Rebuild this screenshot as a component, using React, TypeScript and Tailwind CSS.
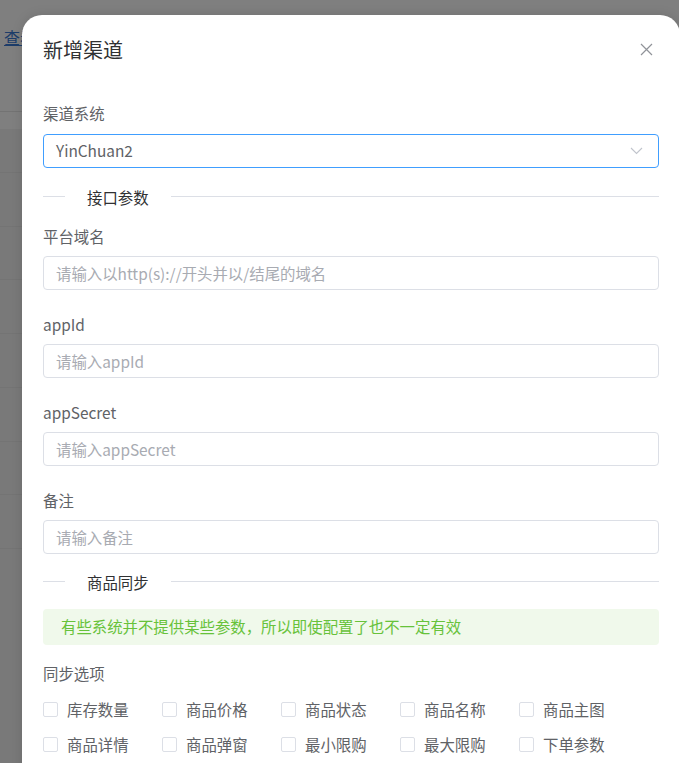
import { useState } from "react";

const FONT = { fontFamily: '"Microsoft YaHei", "Noto Sans CJK SC", "Noto Sans", sans-serif' };

const FIELDS = [
  { label: "平台域名", placeholder: "请输入以http(s)://开头并以/结尾的域名" },
  { label: "appId", placeholder: "请输入appId" },
  { label: "appSecret", placeholder: "请输入appSecret" },
  { label: "备注", placeholder: "请输入备注" },
];

const SYNC_OPTIONS = [
  "库存数量",
  "商品价格",
  "商品状态",
  "商品名称",
  "商品主图",
  "商品详情",
  "商品弹窗",
  "最小限购",
  "最大限购",
  "下单参数",
];

function Divider({ text, height }: { text: string; height: string }) {
  return (
    <div className={`flex items-center ${height}`}>
      <div className="h-px w-[22px] bg-[#dcdfe6]" />
      <span className="px-[22px] text-[15.4px] leading-[20px] text-[#303133]">{text}</span>
      <div className="h-px flex-1 bg-[#dcdfe6]" />
    </div>
  );
}

function Checkbox({ label }: { label: string }) {
  const [checked, setChecked] = useState(false);
  return (
    <label className="flex h-[35px] w-[119px] cursor-pointer items-center">
      <span
        className={`h-[15px] w-[15px] rounded-[2px] border ${
          checked ? "border-[#409eff] bg-[#409eff]" : "border-[#dcdfe6] bg-white"
        }`}
        onClick={() => setChecked(!checked)}
      />
      <span className="ml-[9px] text-[15.4px] text-[#606266]">{label}</span>
    </label>
  );
}

function Background() {
  const rows = [172, 226, 279, 333, 387, 441, 494, 548];
  return (
    <div className="absolute inset-0 bg-white">
      <a className="absolute left-[4px] top-[25px] text-[16px] text-[#3a7bd5] underline">查看</a>
      <div className="absolute left-0 right-0 top-[111px] h-px bg-[#e6e6e6]" />
      <div className="absolute left-0 right-0 top-[129px] h-[420px] bg-[#f3f3f3]" />
      {rows.map((y) => (
        <div key={y} className="absolute left-0 right-0 h-px bg-[#e9e9e9]" style={{ top: y }} />
      ))}
      <div className="absolute left-0 right-0 top-[549px] bottom-0 bg-[#f2f2f2]" />
    </div>
  );
}

export default function App() {
  const [system] = useState("YinChuan2");

  return (
    <div className="relative h-[763px] w-full overflow-hidden" style={FONT}>
      <Background />
      <div className="absolute inset-0 bg-black/50" />

      <div className="relative pl-[22px] pt-[15px]">
        <div className="w-[658px] rounded-t-[20px] bg-white px-[21px] pb-6 shadow-[0_0_12px_rgba(0,0,0,0.12)]">
          <div className="flex h-[49px] items-end justify-between">
            <h1 className="text-[20px] leading-[28px] text-[#303133]">新增渠道</h1>
            <button className="mb-[8px] mr-[6px] text-[#909399]">
              <svg width="13" height="13" viewBox="0 0 13 13" fill="none" stroke="currentColor" strokeWidth="1.2">
                <path d="M1 1L12 12M12 1L1 12" />
              </svg>
            </button>
          </div>

          <div className="pt-[38px]">
            <div className="mb-[10px] h-[22px] text-[15.4px] leading-[22px] text-[#606266]">渠道系统</div>
            <div className="flex h-[34px] items-center justify-between rounded-[4px] border border-[#409eff] pl-[12px] pr-[15px]">
              <span className="text-[15.4px] text-[#606266]">{system}</span>
              <svg width="13" height="8" viewBox="0 0 13 8" fill="none" stroke="#c0c4cc" strokeWidth="1.1">
                <path d="M1 1L6.5 6.5L12 1" />
              </svg>
            </div>

            <Divider text="接口参数" height="h-[57px]" />

            {FIELDS.map((field, i) => (
              <div key={field.label} className={i < FIELDS.length - 1 ? "mb-[23px]" : ""}>
                <div className="mb-[9px] h-[22px] text-[15.4px] leading-[22px] text-[#606266]">{field.label}</div>
                <input
                  className="h-[34px] w-full rounded-[4px] border border-[#dcdfe6] px-[12px] text-[15.4px] text-[#606266] outline-none placeholder:text-[#a8abb2]"
                  placeholder={field.placeholder}
                />
              </div>
            ))}

            <Divider text="商品同步" height="h-[55px]" />

            <div className="flex h-[36px] items-center rounded-[4px] bg-[#f0f9eb] pl-[18px] text-[15.4px] text-[#67c23a]">
              有些系统并不提供某些参数，所以即使配置了也不一定有效
            </div>

            <div className="mt-[17px] h-[22px] text-[15.4px] leading-[22px] text-[#606266]">同步选项</div>
            <div className="mt-[8px] grid w-[595px] grid-cols-5">
              {SYNC_OPTIONS.map((opt) => (
                <Checkbox key={opt} label={opt} />
              ))}
            </div>
          </div>
        </div>
      </div>
    </div>
  );
}
